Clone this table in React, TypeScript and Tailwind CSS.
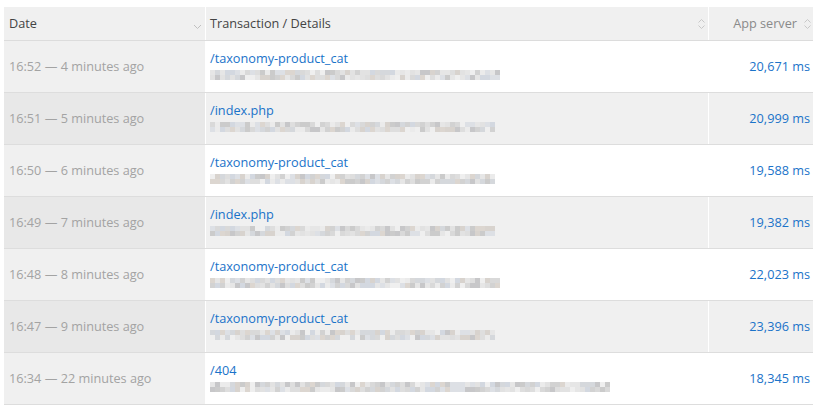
import React from "react";

const rows = [
  { date: "16:52 — 4 minutes ago", path: "/taxonomy-product_cat", w: 292, ms: "20,671 ms" },
  { date: "16:51 — 5 minutes ago", path: "/index.php", w: 287, ms: "20,999 ms" },
  { date: "16:50 — 6 minutes ago", path: "/taxonomy-product_cat", w: 287, ms: "19,588 ms" },
  { date: "16:49 — 7 minutes ago", path: "/index.php", w: 287, ms: "19,382 ms" },
  { date: "16:48 — 8 minutes ago", path: "/taxonomy-product_cat", w: 290, ms: "22,023 ms" },
  { date: "16:47 — 9 minutes ago", path: "/taxonomy-product_cat", w: 287, ms: "23,396 ms" },
  { date: "16:34 — 22 minutes ago", path: "/404", w: 400, ms: "18,345 ms" },
];

const palette = [
  "#d9d9d9", "#d2d2d2", "#dedede", "#e6e6e6", "#cbcbcb", "#d5d8dc", "#d3d8e0",
  "#dcd6d0", "#ebebeb", "#c7c7c9", "#dde0e5", "#d8d3ce", "#efefef", "#e2e2e2",
];

function Pixels({ width, seed }: { width: number; seed: number }) {
  let s = seed * 9301 + 49297;
  const rnd = () => {
    s = (s * 9301 + 49297) % 233280;
    return s / 233280;
  };
  const cols = Math.floor(width / 5);
  const cells: React.ReactNode[] = [];
  for (let i = 0; i < cols; i++) {
    const a = palette[Math.floor(rnd() * palette.length)];
    const b = palette[Math.floor(rnd() * palette.length)];
    cells.push(
      <div key={i} className="flex flex-col w-[5px]">
        <div className="h-[5px]" style={{ backgroundColor: a }} />
        <div className="h-[5px]" style={{ backgroundColor: b }} />
      </div>
    );
  }
  return <div className="flex mt-[3px]">{cells}</div>;
}

function SortBoth() {
  return (
    <svg width="9" height="12" viewBox="0 0 9 12" className="text-[#c8c8c8]">
      <path d="M1.5 4.5 L4.5 1.5 L7.5 4.5" fill="none" stroke="currentColor" strokeWidth="1" />
      <path d="M1.5 7.5 L4.5 10.5 L7.5 7.5" fill="none" stroke="currentColor" strokeWidth="1" />
    </svg>
  );
}

function SortDown() {
  return (
    <svg width="9" height="6" viewBox="0 0 9 6" className="text-[#c0c0c0]">
      <path d="M1 1 L4.5 4.5 L8 1" fill="none" stroke="currentColor" strokeWidth="1" />
    </svg>
  );
}

export default function App() {
  return (
    <div className="w-[831px] h-[412px] bg-white pt-[7px] pl-[4px]" style={{ fontFamily: '"Open Sans", "Noto Sans", sans-serif' }}>
      <div className="w-[809px] text-[12.7px]">
        <div className="flex h-[34px] bg-[#f0f0f0] border-b border-[#dcdcdc]">
          <div className="w-[201px] flex items-center justify-between pl-[5px] pr-[3px] text-[#444]">
            <span>Date</span>
            <span className="mt-[6px]"><SortDown /></span>
          </div>
          <div className="w-[503px] border-l border-white flex items-center justify-between pl-[4px] pr-[2px] text-[#444]">
            <span>Transaction / Details</span>
            <SortBoth />
          </div>
          <div className="flex-1 border-l border-white flex items-center justify-end pr-[1px] gap-[6px] text-[#8a8a8a]">
            <span>App server</span>
            <SortBoth />
          </div>
        </div>
        {rows.map((r, i) => {
          const even = i % 2 === 1;
          return (
            <div key={i} className="flex h-[52px] border-b border-[#dddddd]">
              <div className={`w-[201px] flex items-center pl-[5px] pt-[1px] text-[#a3a3a3] ${even ? "bg-[#e8e8e8]" : "bg-[#f0f0f0]"}`}>
                {r.date}
              </div>
              <div className={`w-[503px] border-l border-white flex flex-col justify-center pl-[4px] pb-[4px] ${even ? "bg-[#f0f0f0]" : "bg-white"}`}>
                <span className="text-[#1a73c9] leading-[18px]">{r.path}</span>
                <Pixels width={r.w} seed={i + 3} />
              </div>
              <div className={`flex-1 border-l border-white flex items-center justify-end pr-[3px] pt-[1px] text-[#1a73c9] ${even ? "bg-[#f0f0f0]" : "bg-white"}`}>
                {r.ms}
              </div>
            </div>
          );
        })}
      </div>
    </div>
  );
}
